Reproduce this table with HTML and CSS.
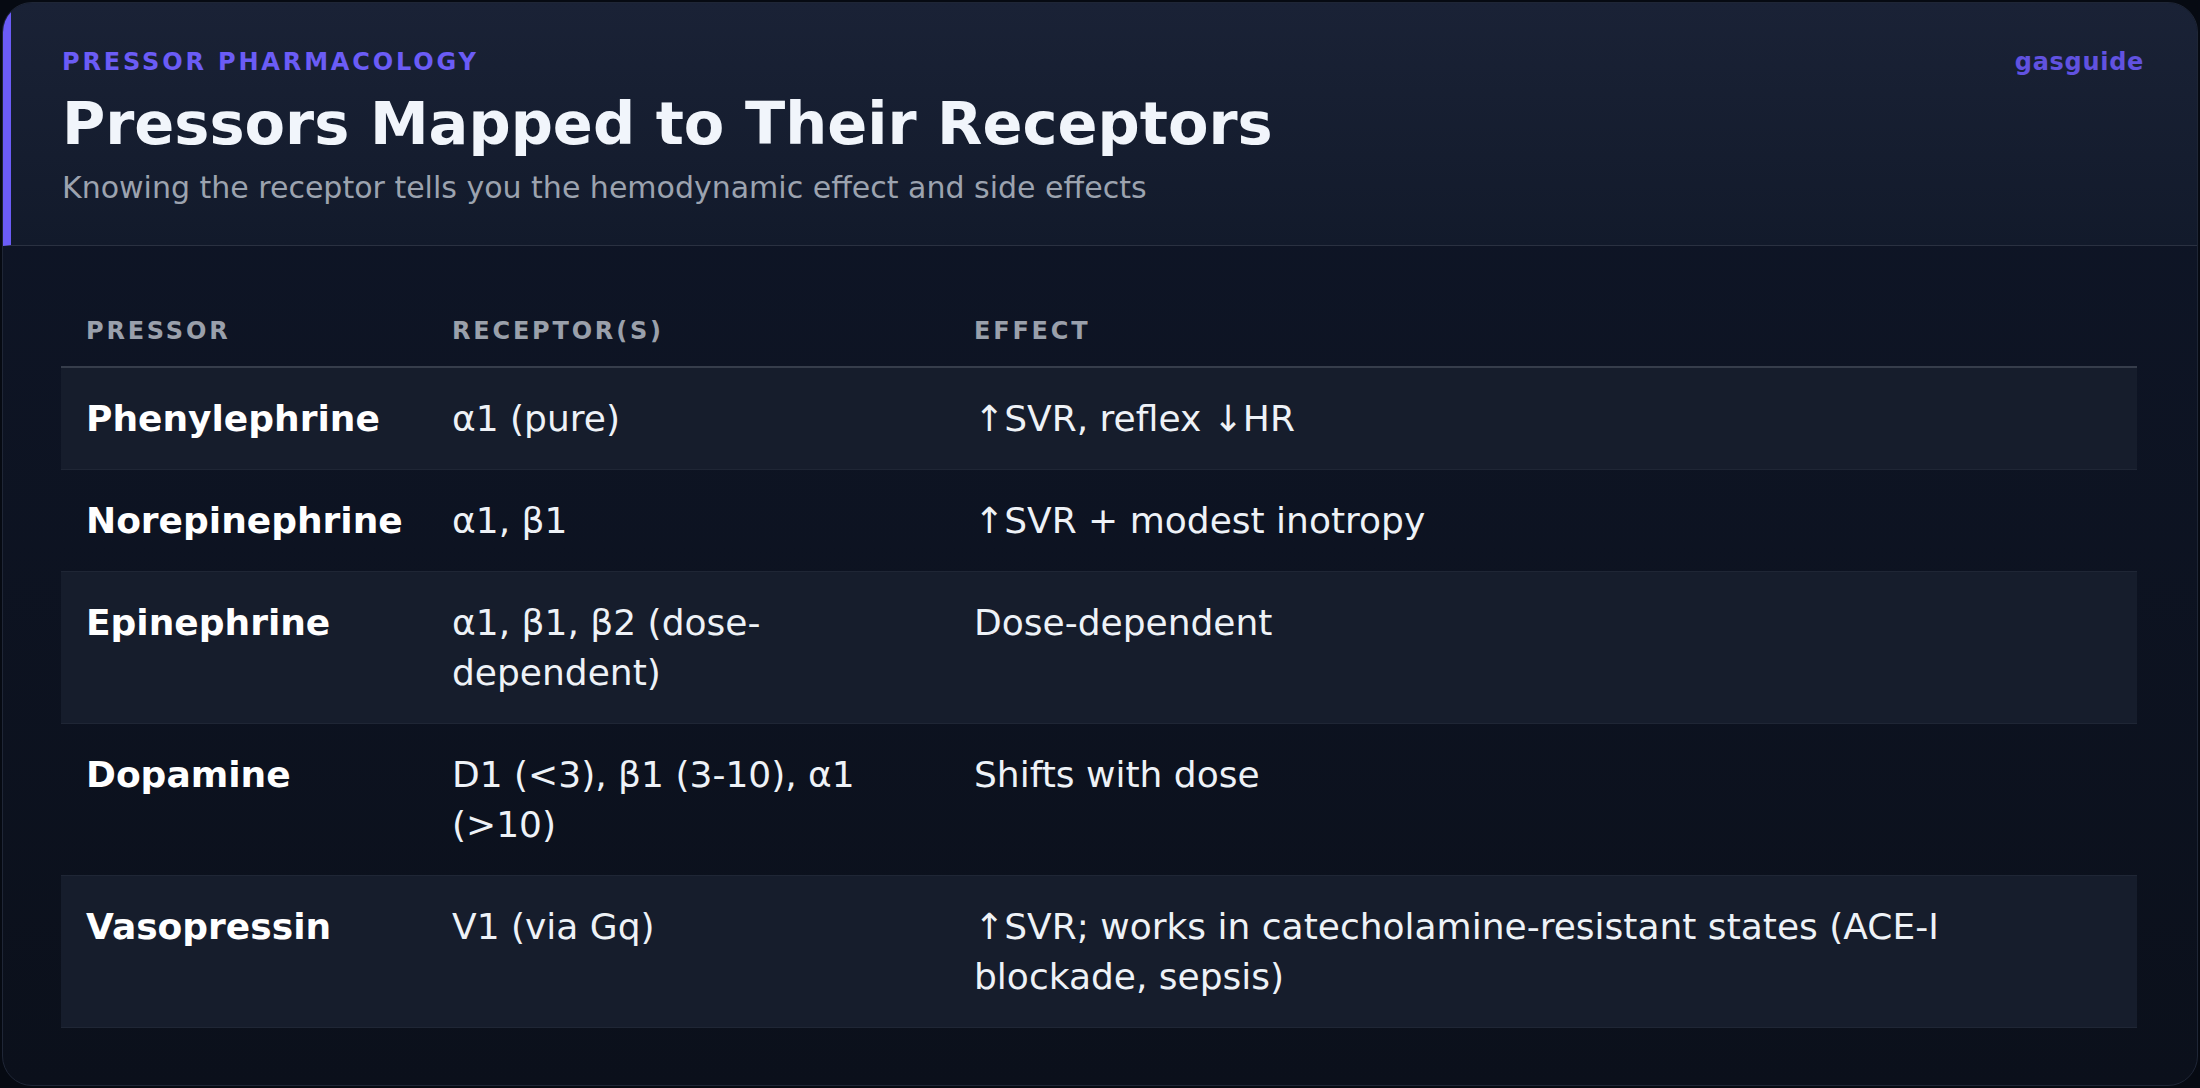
FILE: index.html
```html
<!DOCTYPE html>
<html lang="en">
<head>
<meta charset="utf-8">
<title>Pressors Mapped to Their Receptors</title>
<link rel="stylesheet" href="styles.css">
</head>
<body>
<div class="card">
  <header class="head">
    <div class="head-text">
      <div class="eyebrow">PRESSOR PHARMACOLOGY</div>
      <h1 class="title">Pressors Mapped to Their Receptors</h1>
      <p class="subtitle">Knowing the receptor tells you the hemodynamic effect and side effects</p>
    </div>
    <div class="brand">gasguide</div>
  </header>
  <main class="body">
    <table class="grid">
      <colgroup>
        <col class="c1"><col class="c2"><col class="c3">
      </colgroup>
      <thead>
        <tr><th>PRESSOR</th><th>RECEPTOR(S)</th><th>EFFECT</th></tr>
      </thead>
      <tbody>
        <tr><td class="name">Phenylephrine</td><td>α1 (pure)</td><td>↑SVR, reflex ↓HR</td></tr>
        <tr><td class="name">Norepinephrine</td><td>α1, β1</td><td>↑SVR + modest inotropy</td></tr>
        <tr><td class="name">Epinephrine</td><td>α1, β1, β2 (dose-dependent)</td><td>Dose-dependent</td></tr>
        <tr><td class="name">Dopamine</td><td>D1 (&lt;3), β1 (3-10), α1 (&gt;10)</td><td>Shifts with dose</td></tr>
        <tr><td class="name">Vasopressin</td><td>V1 (via Gq)</td><td>↑SVR; works in catecholamine-resistant states (ACE-I blockade, sepsis)</td></tr>
      </tbody>
    </table>
  </main>
</div>
</body>
</html>
```
FILE: styles.css
```css
* { box-sizing: border-box; }
html, body { margin: 0; height: 100%; }
body {
  background: #060a12;
  padding: 2px;
  font-family: "DejaVu Sans", "Liberation Sans", sans-serif;
  color: #eef2f7;
}
.card {
  height: 100%;
  border: 1px solid #1f2636;
  border-radius: 30px;
  overflow: hidden;
  display: flex;
  flex-direction: column;
  background: linear-gradient(180deg, #0f1628 0%, #0b101b 100%);
}
.head {
  display: flex;
  justify-content: space-between;
  align-items: flex-start;
  padding: 45px 53px 37px 51px;
  border-left: 8px solid #6b5cf6;
  border-bottom: 1px solid #2a3141;
  background: linear-gradient(180deg, #1a2236 0%, #121a2b 100%);
}
.eyebrow {
  font-size: 24px;
  line-height: 28.8px;
  font-weight: 700;
  letter-spacing: 2.85px;
  color: #6b5cf6;
}
.title {
  margin: 11px 0 0;
  font-size: 59px;
  line-height: 71px;
  font-weight: 700;
  color: #f1f5fb;
}
.subtitle {
  margin: 9px 0 0;
  font-size: 30px;
  line-height: 40px;
  color: #9ca3af;
}
.brand {
  font-size: 24px;
  line-height: 28.8px;
  font-weight: 700;
  letter-spacing: 0.7px;
  color: #6152e0;
}
.body {
  flex: 1;
  padding: 51px 60px 0 58px;
}
.grid {
  width: 100%;
  border-collapse: collapse;
  table-layout: fixed;
}
.c1 { width: 366px; }
.c2 { width: 522px; }
th {
  text-align: left;
  font-size: 24px;
  line-height: 33.6px;
  font-weight: 700;
  letter-spacing: 2.8px;
  color: #9aa0ab;
  padding: 18px 25px 18px 25px;
  border-bottom: 2px solid #363d4b;
}
td {
  vertical-align: top;
  font-size: 36px;
  line-height: 50px;
  padding: 25.5px 25px;
  color: #eef2f7;
}
tbody tr { border-bottom: 1px solid #1f2635; }
tbody tr:nth-child(odd) { background: #161d2c; }
td.name { font-weight: 700; color: #ffffff; }
```
